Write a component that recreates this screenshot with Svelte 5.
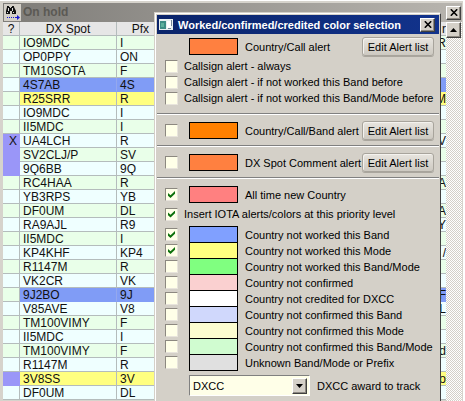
<script>
  const spots = [
    ['', 'IO9MDC', 'I', 'R'],
    ['', 'OP0PPY', 'ON', ''],
    ['', 'TM10SOTA', 'F', ''],
    ['', '4S7AB', '4S', '', 'blue'],
    ['', 'R25SRR', 'R', 'M', 'yellow'],
    ['', 'IO9MDC', 'I', ''],
    ['', 'II5MDC', 'I', ''],
    ['X', 'UA4LCH', 'R', 'V', '', true],
    ['', 'SV2CLJ/P', 'SV', '', '', true],
    ['', '9Q6BB', '9Q', '', '', true],
    ['', 'RC4HAA', 'R', 'CA'],
    ['', 'YB3RPS', 'YB', ''],
    ['', 'DF0UM', 'DL', '/A'],
    ['', 'RA9AJL', 'R9', 'Y'],
    ['', 'II5MDC', 'I', ''],
    ['', 'KP4KHF', 'KP4', '/'],
    ['', 'R1147M', 'R', ''],
    ['', 'VK2CR', 'VK', ''],
    ['', '9J2BO', '9J', 'F', 'blue'],
    ['', 'V85AVE', 'V8', 'L'],
    ['', 'TM100VIMY', 'F', ''],
    ['', 'II5MDC', 'I', ''],
    ['', 'TM100VIMY', 'F', 'd'],
    ['', 'R1147M', 'R', ''],
    ['', '3V8SS', '3V', 'o', 'yellow', true],
    ['', 'DF0UM', 'DL', '']
  ].map(([flag, call, prefix, note, mark = '', tagged = false]) => ({ flag, call, prefix, note, mark, tagged }));

  const callAlerts = $state([
    { label: 'Callsign alert - always', on: false },
    { label: 'Callsign alert - if not worked this Band before', on: false },
    { label: 'Callsign alert - if not worked this Band/Mode before', on: false }
  ]);

  const listAlerts = $state([
    { label: 'Country/Call/Band alert', color: '#ff8000', on: false },
    { label: 'DX Spot Comment alert', color: '#ff8040', on: false }
  ]);

  const levels = $state([
    { label: 'Country not worked this Band', color: '#80a0ff', on: true },
    { label: 'Country not worked this Mode', color: '#ffff80', on: true },
    { label: 'Country not worked this Band/Mode', color: '#80ff80', on: false },
    { label: 'Country not confirmed', color: '#fad0d0', on: false },
    { label: 'Country not credited for DXCC', color: '#ffffff', on: false },
    { label: 'Country not confirmed this Band', color: '#d0d8fc', on: false },
    { label: 'Country not confirmed this Mode', color: '#fcfcd0', on: false },
    { label: 'Country not confirmed this Band/Mode', color: '#d0fcd0', on: false },
    { label: 'Unknown Band/Mode or Prefix', color: '#e0e0e0', on: false }
  ]);

  let newCountry = $state(true);
  let iota = $state(true);
  let award = $state('DXCC');
</script>

{#snippet cross()}
  <svg width="8" height="7" viewBox="0 0 8 7" aria-hidden="true"><path d="M0.8 0.3L7.2 6.7M7.2 0.3L0.8 6.7" stroke="#000" stroke-width="1.6" /></svg>
{/snippet}

<main class="window">
  <header class="bar">
    <button class="find" aria-label="Find">
      <svg width="16" height="16" viewBox="0 0 16 16" aria-hidden="true">
        <path d="M3 1h2v1h1v1h1V2h1V1h2v1l2 4v3H8V6H6v3H2V6l1-4z" fill="#111" />
        <path d="M4.5 3v3M8.5 3v3M3 7.5h1M9 7.5h1" stroke="#ddd" />
        <path d="M3 12.5h8" stroke="#1818d0" stroke-dasharray="1 1" />
        <path d="M11 12.5h3" stroke="#1818d0" />
        <path d="M13 10l3 2.5-3 2.5z" fill="#1818d0" />
      </svg>
    </button>
    <span class="status">On hold</span>
    <button class="close" aria-label="Close">{@render cross()}</button>
  </header>

  <div class="content">
    <table>
      <colgroup><col class="c-flag" /><col class="c-call" /><col class="c-prefix" /><col /></colgroup>
      <thead>
        <tr><th>?</th><th>DX Spot</th><th class="right">Pfx</th><th class="note">r</th></tr>
      </thead>
      <tbody>
        {#each spots as s}
          <tr class={s.mark}>
            <td class={['flag', s.tagged && 'tagged']}>{s.flag}</td>
            <td>{s.call}</td>
            <td>{s.prefix}</td>
            <td class="note">{s.note}</td>
          </tr>
        {/each}
      </tbody>
    </table>
    <div class="scroll">
      <button class="up" aria-label="Scroll up">
        <svg width="7" height="4" viewBox="0 0 7 4" aria-hidden="true"><path d="M0 4L3.5 0L7 4z" /></svg>
      </button>
    </div>
  </div>

  <section class="dialog" role="dialog" aria-labelledby="dialog-title">
    <div class="title">
      <svg width="14" height="11" viewBox="0 0 14 11" aria-hidden="true">
        <rect width="14" height="11" fill="#e8f0f0" />
        <rect x="1" y="2" width="6" height="8" fill="#3c8c84" />
        <rect x="2" y="4" width="3" height="4" fill="#5cb09c" />
        <rect x="8" y="2" width="4" height="7" fill="#fff" />
        <path d="M12.5 1v6M9 9.5h3" stroke="#789" />
      </svg>
      <h1 id="dialog-title">Worked/confirmed/credited color selection</h1>
      <button class="close" aria-label="Close dialog">{@render cross()}</button>
    </div>

    <div class="group first">
      <div class="line">
        <span></span>
        <span class="swatch" style:background="#ff8040"></span>
        <span>Country/Call alert</span>
        <button class="edit">Edit Alert list</button>
      </div>
      <div class="calls">
        {#each callAlerts as a}
          <label class="check"><input type="checkbox" bind:checked={a.on} />{a.label}</label>
        {/each}
      </div>
    </div>

    {#each listAlerts as a, i}
      <div class="group alert">
        <div class="line">
          <input type="checkbox" id="alert-{i}" bind:checked={a.on} />
          <span class="swatch" style:background={a.color}></span>
          <label for="alert-{i}">{a.label}</label>
          <button class="edit">Edit Alert list</button>
        </div>
      </div>
    {/each}

    <div class="group last">
      <label class="line">
        <input type="checkbox" bind:checked={newCountry} />
        <span class="swatch" style:background="#ff8080"></span>
        <span>All time new Country</span>
      </label>
      <label class="check iota"><input type="checkbox" bind:checked={iota} />Insert IOTA alerts/colors at this priority level</label>
      <div class="levels">
        {#each levels as l}
          <label class="line">
            <input type="checkbox" bind:checked={l.on} />
            <span class="swatch" style:background={l.color}></span>
            <span>{l.label}</span>
          </label>
        {/each}
      </div>
      <div class="award">
        <div class="combo">
          <select id="award" bind:value={award}>
            <option>DXCC</option>
            <option>WAZ</option>
            <option>WAS</option>
          </select>
          <span class="drop"><svg width="7" height="4" viewBox="0 0 7 4" aria-hidden="true"><path d="M0 0L3.5 4L7 0z" /></svg></span>
        </div>
        <label for="award">DXCC award to track</label>
      </div>
    </div>
  </section>
</main>

<style>
  * { box-sizing: border-box; }
  button { font: inherit; color: inherit; padding: 0; border: 0; }
  svg { display: block; }
  .window {
    position: relative;
    display: flex;
    flex-direction: column;
    height: 100vh;
    padding: 3px 3px 0 3px;
    overflow: hidden;
    background: #d6d3cc;
    box-shadow: inset -2px 0 #fff, inset 0 1px #fff;
    color: #111;
    font: 12px/13px "Liberation Sans", Arial, sans-serif;
  }
  .bar {
    display: flex;
    align-items: center;
    flex: none;
    height: 19px;
    padding: 0 1px;
    background: linear-gradient(90deg, #7e7c78, #b8b5af);
  }
  .find { width: 17px; height: 17px; background: #d4d0c8; }
  .status { flex: 1; padding-left: 2px; font-weight: 700; color: #5b5954; }
  .close {
    display: grid;
    place-items: center;
    width: 15px;
    height: 14px;
    background: #d4d0c8;
    border: 1px solid;
    border-color: #fff #404040 #404040 #fff;
    box-shadow: inset -1px -1px #8c8880;
  }
  .content { display: flex; flex: 1; min-height: 0; overflow: hidden; }
  table { flex: 1; width: 0; height: max-content; border-collapse: separate; border-spacing: 0; table-layout: fixed; background: #efffff; }
  .c-flag { width: 17px; }
  .c-call { width: 97px; }
  .c-prefix { width: 38px; }
  th, td { height: 14px; padding: 2px 3px 0; border: solid #b4bcbc; border-width: 0 1px 1px 0; overflow: hidden; white-space: nowrap; line-height: 11px; text-align: left; }
  th { background: #e6e6e6; font-weight: 400; text-align: center; }
  th:first-child, .flag { padding-left: 0; padding-right: 0; text-align: center; }
  .flag { text-align: right; padding-right: 2px; }
  th.right { text-align: right; padding-right: 5px; }
  .note { text-align: right; padding-left: 0; padding-right: 0; border-right: 0; }
  tbody tr:nth-child(odd) { background: #e9ffe9; }
  .blue td:not(.flag) { background: #809cf6; border-color: #809cf6 #94a8ee #809cf6 #94a8ee; }
  .yellow td:not(.flag) { background: #ffff80; }
  .tagged { background: #9a96f8; border-color: #9a96f8; }
  .scroll { flex: none; width: 16px; background: repeating-conic-gradient(#fff 0 25%, #d4d0c8 0 50%) 0 0 / 2px 2px; }
  .up, .drop {
    display: grid;
    place-items: center;
    width: 15px;
    height: 16px;
    background: #d4d0c8;
    border: 1px solid;
    border-color: #fff #404040 #404040 #fff;
    box-shadow: inset -1px -1px #8c8880;
  }

  .dialog {
    position: absolute;
    top: 13px;
    left: 155px;
    right: 24px;
    min-height: 100%;
    padding: 0 1px;
    background: #d4d0c8;
    border: 1px solid;
    border-color: #fff #404040 #404040 #fff;
    box-shadow: -1px -1px #d4d0c8;
    font: 11px/14px "Liberation Sans", Arial, sans-serif;
    color: #000;
  }
  .title { display: flex; align-items: center; height: 19px; margin-top: 1px; padding: 0 4px 0 2px; background: linear-gradient(90deg, #0a246a, #12338c); color: #fff; }
  h1 { flex: 1; margin: 0; padding-left: 5px; font-size: 11px; line-height: 14px; white-space: nowrap; }
  .group { padding: 0 5px 0 8px; border-bottom: 1px solid #808080; box-shadow: 0 1px #fff; }
  .first { padding-top: 3px; padding-bottom: 7px; }
  .alert { padding-top: 7px; padding-bottom: 5px; }
  .last { padding-top: 7px; border: 0; box-shadow: none; }
  .line { display: grid; grid-template-columns: 13px 49px minmax(0, 1fr) auto; column-gap: 9px; align-items: center; height: 19px; white-space: nowrap; }
  .line > :nth-child(2) { margin-left: 2px; margin-right: -2px; }
  .swatch { height: 17px; border: 1px solid #000; }
  .calls { padding-top: 2px; }
  .check { display: flex; align-items: center; gap: 6px; height: 16px; white-space: nowrap; }
  input {
    appearance: none;
    display: grid;
    place-items: center;
    flex: none;
    width: 13px;
    height: 13px;
    margin: 0;
    background: #ffffe8;
    border: 1px solid;
    border-color: #8c8880 #e8e4dc #e8e4dc #8c8880;
  }
  input:checked::before { content: ""; width: 7px; height: 7px; background: #0b700b; clip-path: polygon(0 29%, 36% 62%, 100% 0, 100% 38%, 36% 100%, 0 68%); }
  .edit {
    width: 72px;
    height: 19px;
    border: 1px solid #a8a49c;
    border-radius: 3px;
    background: linear-gradient(#e8e5df, #cdc9c1);
    box-shadow: inset 1px 1px #f4f2ee, 0 1px #aaa69e;
  }
  .iota { margin-top: 2px; }
  .levels { padding-top: 4px; }
  .levels .line { height: 16px; }
  .levels .swatch { align-self: start; }
  .award { display: flex; align-items: center; gap: 7px; margin: 5px 0 0 24px; }
  .combo { display: grid; width: 121px; height: 21px; border: 1px solid; border-color: #808080 #fff #fff #808080; background: #ffffe8; }
  select { grid-area: 1 / 1; appearance: none; width: 100%; border: 0; padding: 0 3px; background: none; font: inherit; color: #000; }
  .drop { grid-area: 1 / 1; justify-self: end; align-self: center; margin-right: 2px; pointer-events: none; }
</style>
